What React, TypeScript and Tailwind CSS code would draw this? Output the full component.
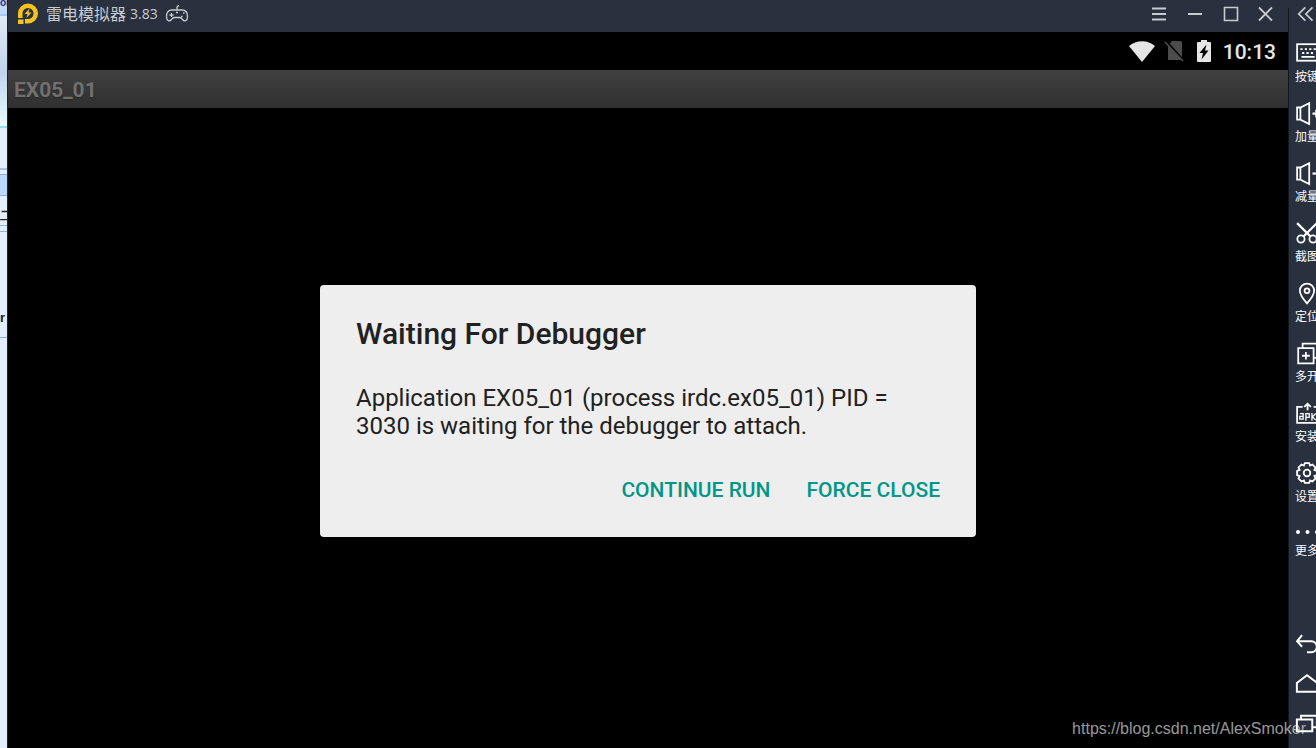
import type { ReactNode } from "react";

const tools = [
  {
    label: "按键",
    icon: (
      <>
        <rect x="1" y="2" width="20" height="15" />
        <path d="M4 6.500h2M8 6.500h2M12 6.500h2M16 6.500h2M5.500 10h2M9.500 10h2M13.500 10h2M5 13.500h12" />
      </>
    ),
  },
  {
    label: "加量",
    icon: (
      <>
        <path d="M1 5v11h3l8 4V1L4 5zM4 5v11" />
        <path d="M15 10.500h7M18.500 7v7" strokeWidth="2" />
      </>
    ),
  },
  {
    label: "减量",
    icon: (
      <>
        <path d="M1 5v11h3l8 4V1L4 5zM4 5v11" />
        <path d="M15 10.500h7" strokeWidth="2" />
      </>
    ),
  },
  {
    label: "截图",
    icon: (
      <>
        <circle cx="4.500" cy="15.500" r="3.300" />
        <circle cx="15.500" cy="15.500" r="3.300" />
        <path d="M1 1 13 13M19 1 7 13" strokeWidth="2" />
      </>
    ),
  },
  {
    label: "定位",
    icon: (
      <>
        <path d="M10 19.500C6 15 3.500 11.500 3.500 8a6.500 6.500 0 0 1 13 0c0 3.500-2.500 7-6.500 11.500z" />
        <circle cx="10" cy="8" r="2.200" />
      </>
    ),
  },
  {
    label: "多开",
    icon: <path d="M2 5.500h14v14H2zM6 5.500V1.500h16v13h-6M5.500 12.500h7M9 9v7" />,
  },
  {
    label: "安装",
    icon: (
      <>
        <path d="M6 4.500H1v14.500h20V4.500h-5M10.500 7.500V2M7.500 4.500l3-3 3 3" />
        <path d="M3.500 10.500h3v5h-3v-2.500h3M9 17v-6.500h3v3.500H9M14.500 10v7M18 10.500l-3 3 3 3" strokeWidth="1.200" />
      </>
    ),
  },
  {
    label: "设置",
    icon: (
      <>
        <path d="M8 1h4l.8 2.300 2.200-1 2.700 2.700-1 2.200 2.300.8v4l-2.300.8 1 2.200-2.700 2.700-2.200-1-.8 2.300H8l-.8-2.300-2.200 1-2.700-2.700 1-2.200L1 12V8l2.300-.8-1-2.200L5 2.300l2.200 1z" />
        <circle cx="10" cy="10" r="3" />
      </>
    ),
  },
];

function Icon({ children, className = "size-5" }: { children: ReactNode; className?: string }) {
  return (
    <svg
      viewBox="0 0 20 20"
      fill="none"
      stroke="currentColor"
      strokeWidth="1.600"
      className={`shrink-0 overflow-visible ${className}`}
      aria-hidden="true"
    >
      {children}
    </svg>
  );
}

function BackgroundWindow() {
  return (
    <div className="flex w-[7px] shrink-0 flex-col overflow-hidden bg-[#e3edfb] font-['Liberation_Sans'] text-[13px] leading-4 text-[#222]">
      <div className="h-4 shrink-0 border-b-2 border-[#a9c9f2] bg-[#c2d9f9] text-[10px] leading-[6px] font-bold text-[#1a2f8a]">ol</div>
      <div className="h-28 shrink-0 border-b-2 border-[#8fdff0] bg-linear-to-b from-[#e2ebf5] via-[#bfd4ec] to-[#e8fbff]" />
      <div className="h-[42px] shrink-0 border-b-2 border-[#a8c3e4]" />
      <div className="mt-1 h-[22px] shrink-0 border-y border-[#8fb2dd] bg-[#bdd7fc]" />
      <div className="h-[30px] shrink-0 border-b border-[#8fb2dd] pt-3 font-bold">二</div>
      <div className="h-[6px] shrink-0 border-b border-[#8fb2dd]" />
      <div className="h-[106px] shrink-0 border-b border-[#8fb2dd] pt-[78px] font-bold">r</div>
    </div>
  );
}

function TitleBar() {
  return (
    <header className="flex h-8 items-start justify-between bg-[#29303e] pr-3 pl-2 text-[#c8cbd0]">
      <div className="flex h-[27px] items-center">
        <svg viewBox="0 0 22 22" className="ml-px size-[22px]" aria-hidden="true">
          <path d="M1 15V10.500a10 10 0 1 1 10 10H8v-4.500h3a5.500 5.500 0 1 0-5.500-5.500V15z" fill="#f5c320" />
          <path d="M1 16.500h5.500V21H1z" fill="#f5c320" />
          <path d="m12.500 5.500-5 5.500h3l-1 4 5-5.500h-3z" fill="#f5c320" />
        </svg>
        <h1 className="ml-[7px] font-['Noto_Sans','Noto_Sans_CJK_SC',sans-serif] text-[16px] leading-6">雷电模拟器</h1>
        <span className="ml-1 font-['Open_Sans',sans-serif] text-[14px] leading-6">3.83</span>
        <svg viewBox="0 0 24 18" fill="none" stroke="currentColor" strokeWidth="1.300" className="ml-[7px] h-[18px] w-6" aria-hidden="true">
          <path d="M12 5V2.500q0-1.500 2-2M7 5h10c4 0 5.500 3 5.500 6.500 0 4.500-3 5.500-5 3-1-1.500-2-2-3-2h-5c-1 0-2 .5-3 2-2 2.500-5 1.500-5-3C1.500 8 3 5 7 5zM4.500 10h4M6.500 8v4M16 11.500h1.500M18 8h1.500M11 7.500h2" />
        </svg>
      </div>
      <div className="flex h-[27px] items-center gap-4">
        <button aria-label="Menu">
          <Icon><path d="M4 4.500h14M4 10h14M4 15.500h14" strokeWidth="2" /></Icon>
        </button>
        <button aria-label="Minimize">
          <Icon><path d="M4 10h14" strokeWidth="2" /></Icon>
        </button>
        <button aria-label="Maximize">
          <Icon><path d="M4.500 3.500h13v13h-13z" /></Icon>
        </button>
        <button aria-label="Close">
          <Icon><path d="m3 3.500 13 13M16 3.500l-13 13" strokeWidth="1.800" /></Icon>
        </button>
      </div>
    </header>
  );
}

function StatusBar() {
  return (
    <div className="flex h-[38px] items-center justify-end bg-black pr-3 text-[#e6e6e6]">
      <svg viewBox="0 0 26 21" className="mr-2 h-[21px] w-[26px]" fill="currentColor" aria-hidden="true">
        <path d="M0 5C7-1.500 19-1.500 26 5L13 21z" />
      </svg>
      <svg viewBox="0 0 22 22" className="mr-3 size-[22px]" aria-hidden="true">
        <path d="M9 1h8a2 2 0 0 1 2 2v17H5V6z" fill="#4c4c4c" />
        <path d="m3 1 18 20" stroke="#000" strokeWidth="2" />
        <path d="m2 2 18 19" stroke="#4c4c4c" strokeWidth="1.500" />
      </svg>
      <svg viewBox="0 0 14 22" className="mr-3 h-[22px] w-[14px]" aria-hidden="true">
        <path d="M1 2h3V0h6v2h3a1 1 0 0 1 1 1v18a1 1 0 0 1-1 1H1a1 1 0 0 1-1-1V3a1 1 0 0 1 1-1z" fill="currentColor" />
        <path d="M9.500 4.500 2.500 13H6l-1.500 6.500 7-9H8z" fill="#000" />
      </svg>
      <time className="pt-[2px] text-[21px] leading-6 font-medium">10:13</time>
    </div>
  );
}

function DebuggerDialog() {
  return (
    <section
      role="dialog"
      aria-labelledby="dialog-title"
      className="w-full max-w-[656px] rounded bg-[#eeeeee] px-9 pt-[31px] pb-[29px] text-[#212121]"
    >
      <h2 id="dialog-title" className="text-[30px] leading-9 font-medium">
        Waiting For Debugger
      </h2>
      <p className="mt-8 text-[24px] leading-7">
        Application EX05_01 (process irdc.ex05_01) PID = 3030 is waiting for the debugger to attach.
      </p>
      <div className="mt-8 flex justify-end gap-9 text-[21px] leading-9 font-medium text-[#009688]">
        <button>CONTINUE RUN</button>
        <button>FORCE CLOSE</button>
      </div>
    </section>
  );
}

function ToolButton({ label, children }: { label: string; children: ReactNode }) {
  return (
    <button className="flex h-[60px] w-full flex-col items-center gap-1">
      {children}
      <span className="leading-4 whitespace-nowrap">{label}</span>
    </button>
  );
}

function SideBar() {
  return (
    <aside className="flex w-7 shrink-0 overflow-hidden bg-[#29303e] text-white">
      <div className="mt-2 w-px shrink-0 bg-[#11151d]" />
      <div className="flex w-9 shrink-0 flex-col pb-1 font-['Noto_Sans_CJK_SC',sans-serif] text-[12px]">
        <button aria-label="Collapse" className="mb-[14px] flex h-7 shrink-0 items-center justify-center text-[#c8cbd0]">
          <Icon className="size-[22px]"><path d="m8.500 4-6 6 6 6M15 4l-6 6 6 6" /></Icon>
        </button>
        {tools.map((tool) => (
          <ToolButton key={tool.label} label={tool.label}>
            <Icon className="size-[22px]">{tool.icon}</Icon>
          </ToolButton>
        ))}
        <button className="flex flex-col items-center">
          <Icon>
            <g fill="currentColor" stroke="none">
              <circle cx="1" cy="10" r="2" />
              <circle cx="10.500" cy="10" r="2" />
              <circle cx="20" cy="10" r="2" />
            </g>
          </Icon>
          <span className="leading-4 whitespace-nowrap">更多</span>
        </button>
        <div className="mt-auto flex flex-col items-center">
          <button aria-label="Back" className="flex h-10 items-center">
            <Icon className="size-[22px]"><path d="M5.500 2 1 7.500l4.500 5M1 7.500h13a5 5 0 0 1 0 10h-4" strokeWidth="1.800" /></Icon>
          </button>
          <button aria-label="Home" className="flex h-10 items-center">
            <Icon className="size-[22px]"><path d="M.8 17V9L10 2l9.200 7v8z" strokeWidth="1.800" /></Icon>
          </button>
          <button aria-label="Recent apps" className="flex h-10 items-center">
            <Icon className="size-[22px]"><path d="M.8 6h14v10.500h-14zM4.500 6V2.500H19v10.500h-4" strokeWidth="1.800" /></Icon>
          </button>
        </div>
      </div>
    </aside>
  );
}

export default function App() {
  return (
    <div className="relative flex h-screen overflow-hidden bg-black font-[Roboto,sans-serif]">
      <BackgroundWindow />
      <div className="flex min-w-0 flex-1 flex-col border-l border-[#1d232e]">
        <TitleBar />
        <StatusBar />
        <div className="h-[38px] bg-linear-to-b from-[#404040] to-[#303030] px-[6px] text-[21px] leading-10 font-bold text-[#707070] text-shadow-sm">
          EX05_01
        </div>
        <main className="flex flex-1 items-center justify-center pb-[34px]">
          <DebuggerDialog />
        </main>
      </div>
      <SideBar />
      <a
        href="https://blog.csdn.net/AlexSmoker"
        className="absolute right-[10px] bottom-[7px] font-['Liberation_Sans',sans-serif] text-[16px] leading-6 text-white/60"
      >
        https://blog.csdn.net/AlexSmoker
      </a>
    </div>
  );
}
